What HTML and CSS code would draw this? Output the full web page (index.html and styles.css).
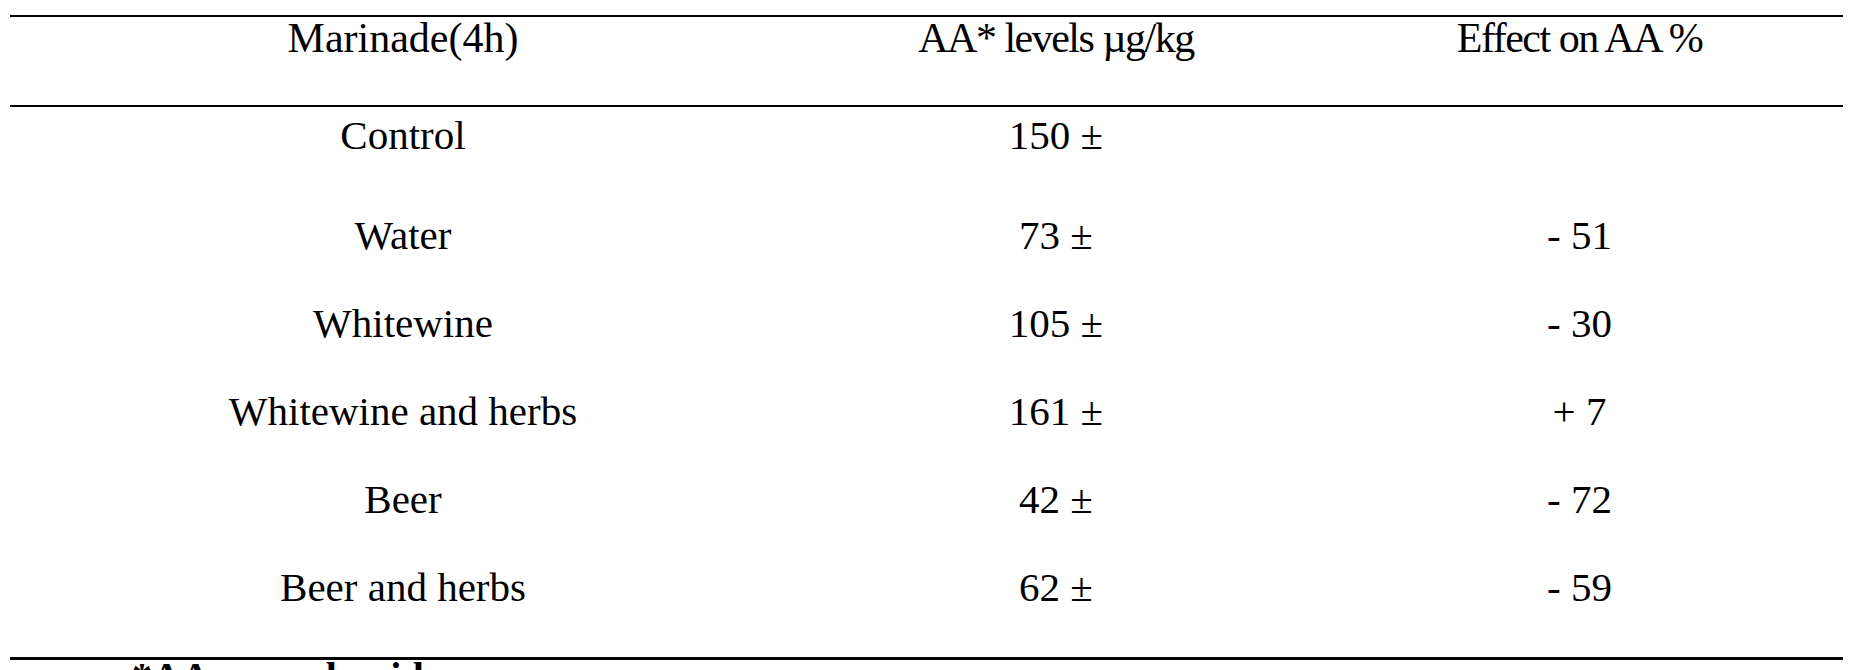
FILE: index.html
```html
<!DOCTYPE html>
<html>
<head>
<meta charset="utf-8">
<link rel="stylesheet" href="styles.css">
</head>
<body>
<div class="table">
  <div class="row head">
    <div class="cell">Marinade(4h)</div>
    <div class="cell tight">AA* levels µg/kg</div>
    <div class="cell tight">Effect on AA %</div>
  </div>
  <div class="body">
    <div class="row first">
      <div class="cell">Control</div>
      <div class="cell">150 ±</div>
      <div class="cell"></div>
    </div>
    <div class="row">
      <div class="cell">Water</div>
      <div class="cell">73 ±</div>
      <div class="cell">- 51</div>
    </div>
    <div class="row">
      <div class="cell">Whitewine</div>
      <div class="cell">105 ±</div>
      <div class="cell">- 30</div>
    </div>
    <div class="row">
      <div class="cell">Whitewine and herbs</div>
      <div class="cell">161 ±</div>
      <div class="cell">+ 7</div>
    </div>
    <div class="row">
      <div class="cell">Beer</div>
      <div class="cell">42 ±</div>
      <div class="cell">- 72</div>
    </div>
    <div class="row last">
      <div class="cell">Beer and herbs</div>
      <div class="cell">62 ±</div>
      <div class="cell">- 59</div>
    </div>
  </div>
  <div class="note">*AA = acrylamide</div>
</div>
</body>
</html>
```
FILE: styles.css
```css
html, body {
  margin: 0;
  padding: 0;
  background: #ffffff;
  overflow: hidden;
}
body {
  font-family: "Liberation Serif", "Times New Roman", serif;
  color: #000;
}
.table {
  margin: 15px 12px 0 10px;
  width: 1833px;
}
.row {
  display: grid;
  grid-template-columns: 786px 520px 527px;
}
.cell {
  text-align: center;
  white-space: nowrap;
}
.head {
  border-top: 2px solid #000;
  border-bottom: 2px solid #000;
  font-size: 42px;
  line-height: 42px;
  padding-bottom: 46px;
}
.head .tight {
  letter-spacing: -1.5px;
}
.body {
  border-bottom: 3px solid #000;
}
.body .row {
  font-size: 41px;
  line-height: 41px;
  padding-bottom: 47px;
}
.body .row.first {
  padding-top: 8px;
  padding-bottom: 59px;
}
.body .row.last {
  padding-bottom: 49px;
}
.note {
  font-weight: bold;
  font-size: 40px;
  line-height: 30px;
  margin-top: 2px;
  padding-left: 122px;
}
```
